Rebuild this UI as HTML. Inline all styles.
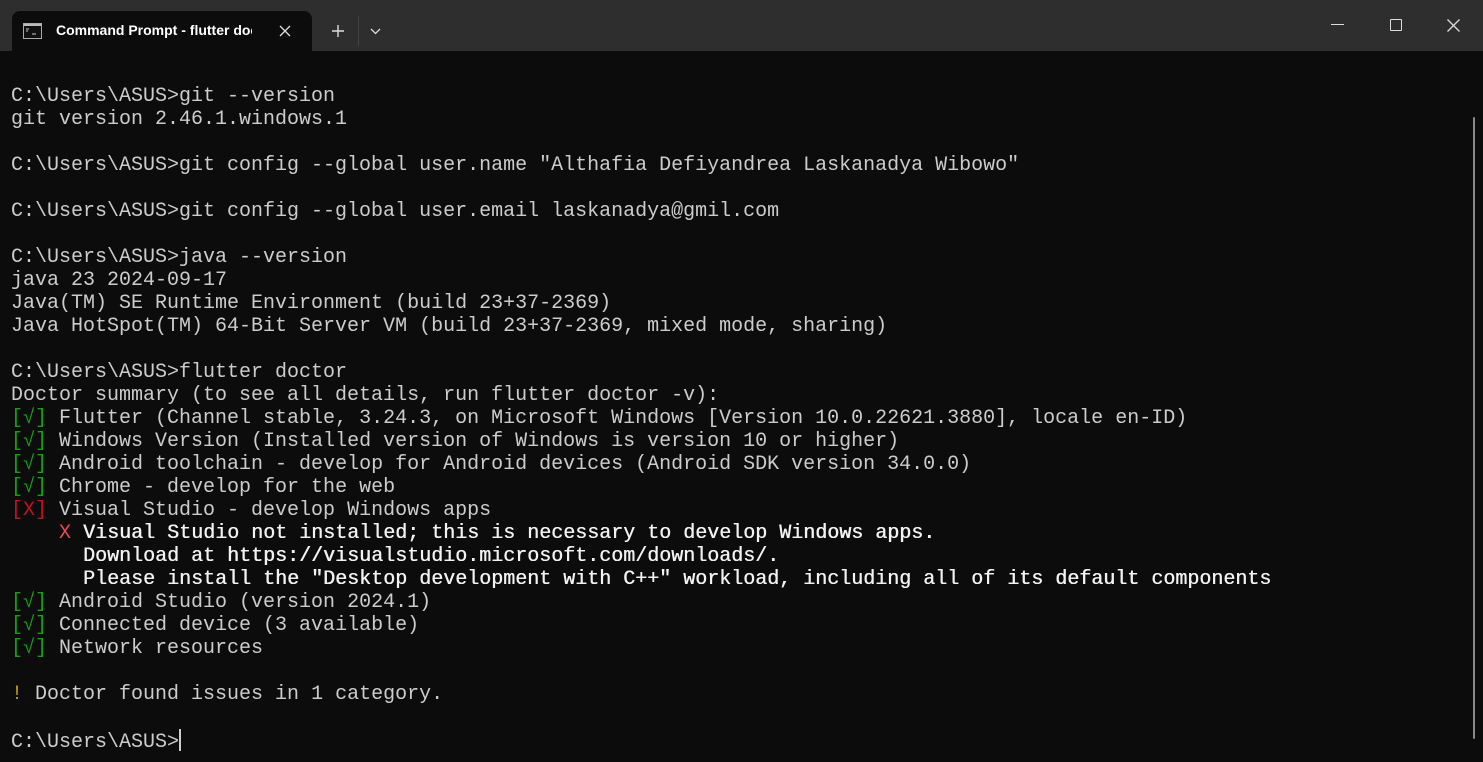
<!DOCTYPE html>
<html><head><meta charset="utf-8"><style>
html,body{margin:0;padding:0;width:1483px;height:762px;overflow:hidden;background:#0c0c0c;}
.title{position:absolute;left:0;top:0;width:1483px;height:51px;background:#2e2e2e;}
.tab{position:absolute;left:12px;top:11px;width:300px;height:40px;background:#0c0c0c;border-radius:8px 8px 0 0;}
.tab .t{position:absolute;left:44px;top:11px;font:bold 14px "Liberation Sans",sans-serif;color:#fff;white-space:nowrap;width:196px;overflow:hidden;}
.term{position:absolute;left:11px;top:62px;font:20px/23px "Liberation Mono",monospace;color:#cccccc;white-space:pre;}
.g{color:#13a10e}.r{color:#c50f1f}.rx{color:#e74856}.y{color:#c19c00}.b{color:#f2f2f2;text-shadow:0.4px 0 0 #f2f2f2}
.cur{display:inline-block;width:2px;height:22px;background:#ccc;vertical-align:-4px;}
.sb{position:absolute;left:1473px;top:117px;width:2px;height:622px;background:#8a8a8a;border-radius:1px;}
</style></head><body>
<div class="title">
 <div class="tab">
  <svg style="position:absolute;left:11px;top:12px" width="19" height="16" viewBox="0 0 19 16"><rect x="0.5" y="0.5" width="18" height="15" fill="#111" stroke="#aaa"/><rect x="1" y="1" width="17" height="2" fill="#bbb"/><path d="M3 6h3M3 8h2M9 11h4" stroke="#ccc" stroke-width="1"/></svg>
  <div class="t">Command Prompt - flutter  doctor</div>
  <svg style="position:absolute;left:267px;top:14px" width="12" height="12" viewBox="0 0 12 12"><path d="M1 1L11 11M11 1L1 11" stroke="#ddd" stroke-width="1.3"/></svg>
 </div>
 <svg style="position:absolute;left:331px;top:24px" width="14" height="14" viewBox="0 0 14 14"><path d="M7 1V13M1 7H13" stroke="#ddd" stroke-width="1.4"/></svg>
 <div style="position:absolute;left:358px;top:16px;width:1px;height:30px;background:#444"></div>
 <svg style="position:absolute;left:370px;top:28px" width="11" height="7" viewBox="0 0 11 7"><path d="M1 1L5.5 5.5L10 1" stroke="#ddd" stroke-width="1.3" fill="none"/></svg>
 <div style="position:absolute;left:1331px;top:24px;width:13px;height:1px;background:#ddd"></div>
 <div style="position:absolute;left:1390px;top:19px;width:10px;height:10px;border:1.3px solid #ddd;border-radius:1px"></div>
 <svg style="position:absolute;left:1447px;top:19px" width="13" height="13" viewBox="0 0 13 13"><path d="M0.5 0.5L12.5 12.5M12.5 0.5L0.5 12.5" stroke="#ddd" stroke-width="1.3"/></svg>
</div>
<div class="term">
C:\Users\ASUS>git --version
git version 2.46.1.windows.1

C:\Users\ASUS>git config --global user.name "Althafia Defiyandrea Laskanadya Wibowo"

C:\Users\ASUS>git config --global user.email laskanadya@gmil.com

C:\Users\ASUS>java --version
java 23 2024-09-17
Java(TM) SE Runtime Environment (build 23+37-2369)
Java HotSpot(TM) 64-Bit Server VM (build 23+37-2369, mixed mode, sharing)

C:\Users\ASUS>flutter doctor
Doctor summary (to see all details, run flutter doctor -v):
<span class="g">[√]</span> Flutter (Channel stable, 3.24.3, on Microsoft Windows [Version 10.0.22621.3880], locale en-ID)
<span class="g">[√]</span> Windows Version (Installed version of Windows is version 10 or higher)
<span class="g">[√]</span> Android toolchain - develop for Android devices (Android SDK version 34.0.0)
<span class="g">[√]</span> Chrome - develop for the web
<span class="r">[X]</span> Visual Studio - develop Windows apps
    <span class="rx">X</span> <span class="b">Visual Studio not installed; this is necessary to develop Windows apps.</span>
      <span class="b">Download at https://visualstudio.microsoft.com/downloads/.</span>
      <span class="b">Please install the "Desktop development with C++" workload, including all of its default components</span>
<span class="g">[√]</span> Android Studio (version 2024.1)
<span class="g">[√]</span> Connected device (3 available)
<span class="g">[√]</span> Network resources

<span class="y">!</span> Doctor found issues in 1 category.

C:\Users\ASUS><span class="cur"></span></div>
<div class="sb"></div>
</body></html>
